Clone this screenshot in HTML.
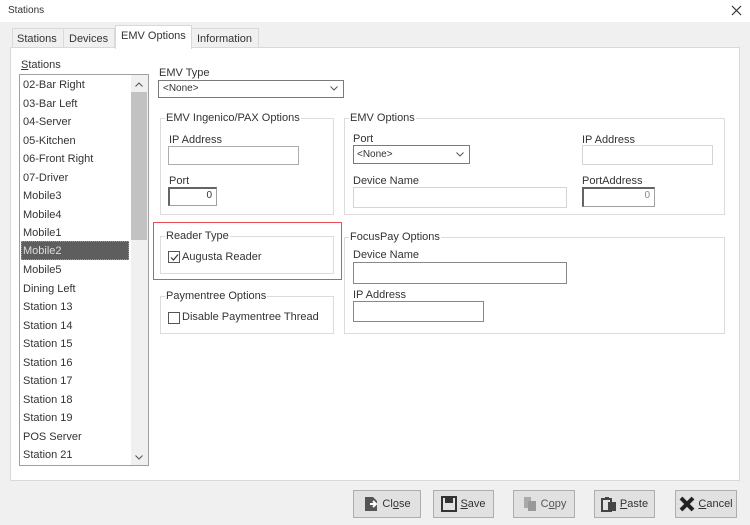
<!DOCTYPE html>
<html><head><style>
*{margin:0;padding:0;box-sizing:border-box}
body{width:750px;height:525px;background:#f0f0f0;font-family:"Liberation Sans",sans-serif;font-size:11px;color:#333;position:relative;overflow:hidden}
.a{position:absolute;white-space:nowrap}
.in{position:absolute;background:#fff;border:1px solid #adadad}
.sk{position:absolute;background:#fff;border:1px solid #a0a0a0;border-top:2px solid #646464;border-left:2px solid #646464;text-align:right;padding-right:4px;font-size:10px;line-height:14px}
.grp{position:absolute;border:1px solid #dcdcdc}
.gt{position:absolute;top:-7px;left:4px;background:#fff;padding:0 1px;line-height:13px}
.cb{position:absolute;width:12px;height:12px;border:1px solid #555;background:#fff}
.btn{position:absolute;top:490px;height:28px;border:1px solid #adadad;background:#e1e1e1;display:flex;align-items:center;justify-content:center;gap:3px}
.li{position:absolute;left:23px;line-height:18px}
.chev{position:absolute;right:5px;top:5px}
</style></head><body>
<div class="a" style="left:0;top:0;width:750px;height:22px;background:#fff"></div>
<div class="a" style="left:8px;top:5px;font-size:10px">Stations</div>
<svg class="a" style="left:731px;top:5px" width="11" height="11"><path d="M1 1L10 10M10 1L1 10" stroke="#333" stroke-width="1.2"/></svg>

<div class="a" style="left:10px;top:47px;width:730px;height:434px;background:#fff;border:1px solid #d9d9d9"></div>
<div class="a" style="left:12px;top:28px;width:52px;height:20px;border:1px solid #d9d9d9;background:#f0f0f0;padding:4px 0 0 4px">Stations</div>
<div class="a" style="left:63px;top:28px;width:52px;height:20px;border:1px solid #d9d9d9;background:#f0f0f0;padding:4px 0 0 5px">Devices</div>
<div class="a" style="left:191px;top:28px;width:68px;height:20px;border:1px solid #d9d9d9;background:#f0f0f0;padding:4px 0 0 5px">Information</div>
<div class="a" style="left:115px;top:25px;width:77px;height:24px;border:1px solid #d9d9d9;border-bottom:none;background:#fff;padding:4px 0 0 5px">EMV Options</div>

<div class="a" style="left:21px;top:59px"><u>S</u>tations</div>
<div class="a" style="left:19px;top:74px;width:130px;height:392px;border:1px solid #a0a0a0;background:#fff"></div>
<div class="a" style="left:131px;top:75px;width:17px;height:390px;background:#f0f0f0"></div>
<div class="a" style="left:131px;top:92px;width:16px;height:148px;background:#c2c2c2"></div>
<svg class="a" style="left:135px;top:82px" width="8" height="5"><path d="M0.5 4.5L4 1L7.5 4.5" stroke="#555" fill="none"/></svg>
<svg class="a" style="left:135px;top:455px" width="8" height="5"><path d="M0.5 0.5L4 4L7.5 0.5" stroke="#555" fill="none"/></svg>
<div class="a" style="left:21px;top:241px;width:108px;height:19px;background:#5e5e5e;border:1px dotted #999"></div>
<div class="li" style="top:76px">02-Bar Right</div>
<div class="li" style="top:94.5px">03-Bar Left</div>
<div class="li" style="top:113px">04-Server</div>
<div class="li" style="top:131.5px">05-Kitchen</div>
<div class="li" style="top:150px">06-Front Right</div>
<div class="li" style="top:168.5px">07-Driver</div>
<div class="li" style="top:187px">Mobile3</div>
<div class="li" style="top:205.5px">Mobile4</div>
<div class="li" style="top:224px">Mobile1</div>
<div class="li" style="top:242px;color:#ddd">Mobile2</div>
<div class="li" style="top:261px">Mobile5</div>
<div class="li" style="top:279.5px">Dining Left</div>
<div class="li" style="top:298px">Station 13</div>
<div class="li" style="top:316.5px">Station 14</div>
<div class="li" style="top:335px">Station 15</div>
<div class="li" style="top:353.5px">Station 16</div>
<div class="li" style="top:372px">Station 17</div>
<div class="li" style="top:390.5px">Station 18</div>
<div class="li" style="top:409px">Station 19</div>
<div class="li" style="top:427.5px">POS Server</div>
<div class="li" style="top:446px">Station 21</div>

<div class="a" style="left:159px;top:67px">EMV Type</div>
<div class="in" style="left:158px;top:80px;width:186px;height:18px;border-color:#7a7a7a;padding:2px 0 0 4px;font-size:10px">&lt;None&gt;<svg class="chev" width="8" height="5"><path d="M0.5 0.5L4 4L7.5 0.5" stroke="#555" fill="none"/></svg></div>

<div class="grp" style="left:160px;top:118px;width:174px;height:97px"><span class="gt">EMV Ingenico/PAX Options</span></div>
<div class="a" style="left:169px;top:134px">IP Address</div>
<div class="in" style="left:168px;top:146px;width:131px;height:19px"></div>
<div class="a" style="left:169px;top:175px">Port</div>
<div class="sk" style="left:168px;top:187px;width:49px;height:19px">0</div>

<div class="grp" style="left:344px;top:118px;width:381px;height:97px"><span class="gt">EMV Options</span></div>
<div class="a" style="left:353px;top:133px">Port</div>
<div class="in" style="left:353px;top:145px;width:117px;height:19px;border-color:#7a7a7a;padding:3px 0 0 3px;font-size:10px">&lt;None&gt;<svg class="chev" width="8" height="5" style="top:6px"><path d="M0.5 0.5L4 4L7.5 0.5" stroke="#555" fill="none"/></svg></div>
<div class="a" style="left:353px;top:175px">Device Name</div>
<div class="in" style="left:353px;top:187px;width:214px;height:21px;border-color:#d4d4d4"></div>
<div class="a" style="left:582px;top:134px">IP Address</div>
<div class="in" style="left:582px;top:145px;width:131px;height:20px;border-color:#d4d4d4"></div>
<div class="a" style="left:582px;top:175px">PortAddress</div>
<div class="sk" style="left:582px;top:187px;width:73px;height:20px;color:#888">0</div>

<div class="a" style="left:153px;top:222px;width:189px;height:58px;border:1px solid #e84c55"></div>
<div class="grp" style="left:160px;top:236px;width:174px;height:38px"><span class="gt">Reader Type</span></div>
<div class="cb" style="left:168px;top:251px"><svg style="position:absolute;left:1px;top:1px" width="9" height="9"><path d="M1 4.5L3.5 7L8 1.5" stroke="#333" stroke-width="1.2" fill="none"/></svg></div>
<div class="a" style="left:182px;top:251px">Augusta Reader</div>

<div class="grp" style="left:160px;top:296px;width:174px;height:38px"><span class="gt">Paymentree Options</span></div>
<div class="cb" style="left:168px;top:312px"></div>
<div class="a" style="left:182px;top:311px">Disable Paymentree Thread</div>

<div class="grp" style="left:344px;top:237px;width:381px;height:97px"><span class="gt">FocusPay Options</span></div>
<div class="a" style="left:353px;top:249px">Device Name</div>
<div class="in" style="left:353px;top:262px;width:214px;height:22px;border-color:#888"></div>
<div class="a" style="left:353px;top:289px">IP Address</div>
<div class="in" style="left:353px;top:301px;width:131px;height:21px;border-color:#888"></div>

<div class="btn" style="left:353px;width:68px"><svg width="16" height="16"><path d="M2 1h8l4 4v10H2z" fill="#555"/><path d="M7 8h6M10 5l3 3-3 3" stroke="#fff" stroke-width="2" fill="none"/></svg><span>Cl<u>o</u>se</span></div>
<div class="btn" style="left:433px;width:61px"><svg width="16" height="16"><rect x="1" y="1" width="14" height="14" fill="none" stroke="#333" stroke-width="2"/><rect x="4" y="2" width="8" height="5" fill="#333"/></svg><span><u>S</u>ave</span></div>
<div class="btn" style="left:513px;width:62px;color:#555"><svg width="16" height="16"><rect x="2" y="1" width="7" height="11" fill="#aaa"/><rect x="6" y="5" width="8" height="10" fill="#999"/></svg><span>C<u>o</u>py</span></div>
<div class="btn" style="left:594px;width:61px"><svg width="16" height="16"><rect x="1" y="3" width="9" height="12" fill="none" stroke="#444" stroke-width="2"/><rect x="4" y="1" width="4" height="3" fill="#444"/><rect x="7" y="6" width="8" height="9" fill="#444"/></svg><span><u>P</u>aste</span></div>
<div class="btn" style="left:675px;width:62px"><svg width="16" height="16"><path d="M2 2L14 14M14 2L2 14" stroke="#222" stroke-width="4"/></svg><span><u>C</u>ancel</span></div>
</body></html>
